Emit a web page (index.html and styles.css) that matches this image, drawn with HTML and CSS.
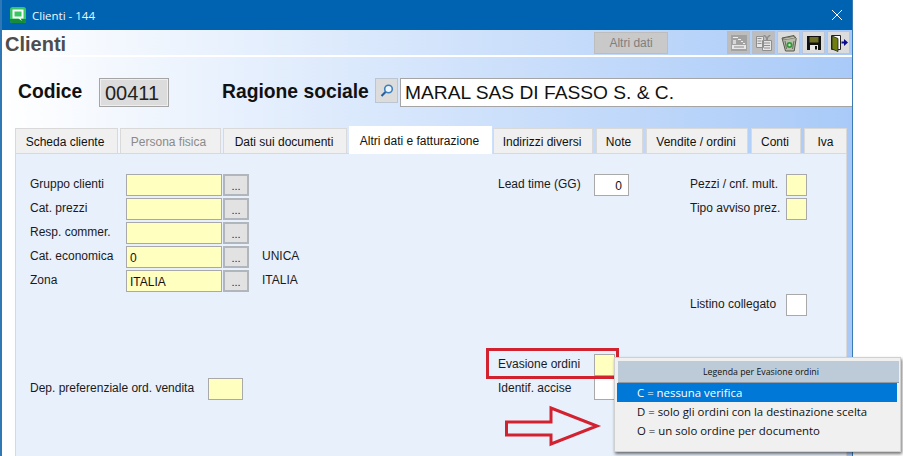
FILE: index.html
```html
<!DOCTYPE html>
<html lang="it">
<head>
<meta charset="utf-8">
<title>Clienti - 144</title>
<link rel="stylesheet" href="styles.css">
</head>
<body>
<div class="window">
  <div class="titlebar">
    <svg class="app-icon" width="16" height="16" viewBox="0 0 16 16"><rect width="16" height="16" rx="2.500" fill="#38c563"/><path d="M0 12h16v1.500a2.500 2.500 0 0 1-2.500 2.500h-11A2.500 2.500 0 0 1 0 13.500z" fill="#178a3c"/><path d="M2.500 2.500h11v9h-3l1.500 2.500-3.500-2.500h-6z" fill="#fff"/><rect x="4.500" y="4.500" width="7" height="5" fill="#38c563"/></svg>
    <span class="title-text">Clienti - 144</span>
    <svg class="close" width="12" height="12" viewBox="0 0 12 12"><path d="M1 1l10 10M11 1L1 11" stroke="#fff" stroke-width="1" fill="none"/></svg>
  </div>
  <div class="toolbar">
    <h1 class="page-title">Clienti</h1>
    <button class="btn-altri">Altri dati</button>
    <div class="tools">
      <span class="tool off"><svg width="20" height="20" viewBox="0 0 20 20"><path d="M2 2h16v16H2z" fill="#a2a2a2"/><path d="M3 12h14v4H3z" fill="#e8e8e8"/><path d="M4 4h5v1H4zM9 6h3v1H9zM12 8h2v1h-2zM14 10h2v1h-2z" fill="#eee"/><path d="M4 7h3v4H4z" fill="#d8d8d8"/><path d="M5 14h10" stroke="#8a8a8a"/></svg></span>
      <span class="tool off"><svg width="20" height="20" viewBox="0 0 20 20"><path d="M2.500 3.500h7v11h-7zM8.500 7.500h9v10h-9z" fill="#e6e6e6" stroke="#8e8e8e"/><path d="M3.500 5.500h4M3.500 8h4M3.500 10.500h4M10 10h6M10 12.500h6M10 15h6" stroke="#8e8e8e"/><path d="M11 2l2 2 2-2h2l-3 3v2h-2V5l-3-3z" fill="#8e8e8e"/></svg></span>
      <span class="tool"><svg width="20" height="20" viewBox="0 0 20 20"><path d="M3 5l12-2.500 2.200 3-2 12.500H6.500L3 5z" fill="#b9bcac" stroke="#55584a"/><path d="M4 5.500l11-2 .8 1.500-11 1.800z" fill="#e4e4d8" stroke="#55584a" stroke-width=".6"/><path d="M6 8l1.500 8M15 8l-1.500 8" stroke="#6a6e5a"/><circle cx="10.500" cy="12" r="3" fill="#2f9a3a"/><circle cx="10.500" cy="12" r="1.200" fill="#c4e8b8"/></svg></span>
      <span class="tool"><svg width="20" height="20" viewBox="0 0 20 20"><path d="M3 3h14v14H3z" fill="#111"/><path d="M5.500 4h9v5.500h-9z" fill="#6f6f26"/><path d="M6 12h8v5H6z" fill="#e8e8e8"/><path d="M11 13h2v3.500h-2z" fill="#111"/></svg></span>
      <span class="tool"><svg width="20" height="20" viewBox="0 0 20 20"><path d="M2.500 2.500h9v14h-9z" fill="#fff" stroke="#222"/><path d="M3 3l6 2.500v13L3 16z" fill="#6f7f10" stroke="#222" stroke-width=".8"/><path d="M12.500 8.500h2.500V6l4 3.500-4 3.500v-2.500h-2.500z" fill="#0a0a90"/></svg></span>
    </div>
  </div>
  <div class="identity">
    <span class="big-label label-code">Codice</span>
    <span class="code-field">00411</span>
    <span class="big-label label-name">Ragione sociale</span>
    <span class="search-btn"><svg width="16" height="16" viewBox="0 0 16 16"><circle cx="9.500" cy="6" r="3.800" fill="#eef6fd" stroke="#3c7fc0" stroke-width="1.600"/><path d="M6.500 9L2.500 13" stroke="#2a5f9c" stroke-width="2.200"/></svg></span>
    <span class="name-field">MARAL SAS DI FASSO S. &amp; C.</span>
  </div>
  <div class="tabs">
    <span class="tab w-scheda">Scheda cliente</span>
    <span class="tab w-persona disabled">Persona fisica</span>
    <span class="tab w-dati">Dati sui documenti</span>
    <span class="tab w-altri active">Altri dati e fatturazione</span>
    <span class="tab w-indirizzi">Indirizzi diversi</span>
    <span class="tab w-note">Note</span>
    <span class="tab w-vendite">Vendite / ordini</span>
    <span class="tab w-conti">Conti</span>
    <span class="tab w-iva">Iva</span>
  </div>
  <div class="panel">
    <div class="col col-left">
      <div class="row"><label class="lbl lbl-left">Gruppo clienti</label><span class="field wide yellow"></span><span class="dots">...</span></div>
      <div class="row"><label class="lbl lbl-left">Cat. prezzi</label><span class="field wide yellow"></span><span class="dots">...</span></div>
      <div class="row"><label class="lbl lbl-left">Resp. commer.</label><span class="field wide yellow"></span><span class="dots">...</span></div>
      <div class="row"><label class="lbl lbl-left">Cat. economica</label><span class="field wide yellow">0</span><span class="dots">...</span><span class="desc">UNICA</span></div>
      <div class="row"><label class="lbl lbl-left">Zona</label><span class="field wide yellow">ITALIA</span><span class="dots">...</span><span class="desc">ITALIA</span></div>
      <div class="row dep"><label class="lbl lbl-dep">Dep. preferenziale ord. vendita</label><span class="field mid yellow"></span></div>
    </div>
    <div class="col col-mid">
      <div class="row"><label class="lbl lbl-mid">Lead time (GG)</label><span class="field mid white num">0</span></div>
      <div class="row evasione"><label class="lbl lbl-mid">Evasione ordini</label><span class="field small yellow"></span></div>
      <div class="row"><label class="lbl lbl-mid">Identif. accise</label><span class="field small white"></span></div>
    </div>
    <div class="col col-right">
      <div class="row"><label class="lbl lbl-mid">Pezzi / cnf. mult.</label><span class="field small yellow"></span></div>
      <div class="row"><label class="lbl lbl-mid">Tipo avviso prez.</label><span class="field small yellow"></span></div>
      <div class="row listino"><label class="lbl lbl-mid">Listino collegato</label><span class="field small white"></span></div>
    </div>
  </div>
</div>
<div class="red-box"></div>
<svg class="arrow" width="100" height="44" viewBox="0 0 100 44"><path d="M2.500 17H47V3L93 21 47 39V30H2.500z" fill="none" stroke="#d3222f" stroke-width="3"/></svg>
<div class="legend">
  <div class="legend-title">Legenda per Evasione ordini</div>
  <div class="legend-item selected">C = nessuna verifica</div>
  <div class="legend-item">D = solo gli ordini con la destinazione scelta</div>
  <div class="legend-item">O = un solo ordine per documento</div>
</div>
</body>
</html>
```

FILE: styles.css
```css
* { box-sizing: border-box; }
html, body { margin: 0; padding: 0; width: 903px; height: 456px; overflow: hidden; background: #fff; }
body { position: relative; font-family: "Liberation Sans", Arial, sans-serif; font-size: 12px; color: #111; }

.window {
  width: 853px; height: 456px; display: flex; flex-direction: column; overflow: hidden;
  border-left: 2px solid #2f78b5; border-right: 1px solid #3b7ab2;
  background: linear-gradient(to right, #fff 0%, #a9caf8 100%);
}
.titlebar {
  height: 30px; margin-left: -2px; margin-right: -1px; flex: none; background: #0063b1;
  display: flex; align-items: center; padding: 0 10px 0 10px; color: #fff;
}
.app-icon { flex: none; }
.title-text { margin-left: 6px; font-family: "Open Sans", sans-serif; font-size: 11.500px; color: #f2f7fb; }
.close { margin-left: auto; }

.toolbar {
  height: 27px; flex: none; display: flex; align-items: flex-start;
  border-bottom: 2px solid; border-image: linear-gradient(to bottom, #a3a3a3 50%, #fff 50%) 1;
  padding: 2px 2px 0 3px;
}
.page-title { margin: 0; font-size: 20px; line-height: 24px; font-weight: 700; color: #4d4d4d; }
.btn-altri {
  margin-left: 528px; width: 74px; height: 22px; padding: 0; border: 1px solid #bdbdbd; background: #c9c9c9;
  font: 12px "Liberation Sans", Arial, sans-serif; color: #7f7f7f;
}
.tools { margin-left: 59px; display: flex; gap: 2px; }
.tool { width: 23px; height: 23px; margin-top: -1px; background: #dcdcdc; border: 1px solid #b9c6d6; display: flex; align-items: center; justify-content: center; }
.tool.off { background: #bdbdbd; border-color: #b4bdc8; }

.identity { height: 71px; flex: none; padding: 21px 0 0 16px; display: flex; align-items: flex-start; }
.big-label { font-size: 19.300px; font-weight: 700; line-height: 27px; color: #111; white-space: nowrap; }
.label-code { width: 64px; }
.label-name { width: 147px; margin-left: 53px; }
.code-field {
  margin-left: 17px; width: 70px; height: 29px; padding-right: 4px; background: #dcdcdc; border: 1px solid #a5a5a5;
  box-shadow: inset 0 0 0 1px #efefef;
  font-size: 20px; line-height: 29px; text-align: center; color: #222; flex: none;
}
.search-btn {
  margin-left: 6px; width: 23px; height: 25px; background: #dcdcdc; border: 1px solid #bcc6d2;
  display: flex; align-items: center; justify-content: center; flex: none;
}
.name-field {
  margin-left: 2px; flex: 1; height: 29px; background: #fff; border: 1px solid #a5a5a5; border-right: 0;
  font-size: 19.200px; line-height: 28px; padding-left: 4px; color: #111;
}

.tabs { height: 25px; flex: none; display: flex; margin-left: 13px; position: relative; z-index: 1; }
.tab {
  height: 25px; margin-right: 3px; padding-right: 2px; background: #f0f0f0; border: 1px solid #d9d9d9; border-bottom: 0;
  text-align: center; line-height: 26px; color: #111; flex: none;
}
.tab.disabled { color: #8a8a8a; }
.tab.active { background: #fff; height: 28px; margin-top: -2px; line-height: 30px; margin-right: 1px; margin-left: -1px; border: 0; }
.w-scheda { width: 103px; margin-right: 2px; padding-right: 3px; }
.w-persona { width: 101px; margin-right: 2px; padding-right: 4px; }
.w-dati { width: 124px; }
.w-altri { width: 143px; }
.w-indirizzi { width: 100px; }
.w-note { width: 47px; }
.w-vendite { width: 102px; }
.w-conti { width: 50px; }
.w-iva { width: 43px; margin-right: 0; padding-right: 0; }

.panel {
  flex: 1; margin: 0 5px 0 13px; background: #e8f0fc;
  border: 1px solid #d9d9d9; border-bottom: 0;
  padding: 20px 0 0 14px; display: flex;
}
.col { display: flex; flex-direction: column; gap: 2px; flex: none; }
.col-left { width: 468px; }
.col-mid { width: 192px; }
.row { display: flex; height: 22px; align-items: flex-start; }
.lbl { line-height: 20px; color: #1a1a1a; white-space: nowrap; flex: none; }
.lbl-left { width: 96px; }
.lbl-mid { width: 96px; }
.lbl-dep { width: 178px; }
.dep { margin-top: 84px; }
.evasione { margin-top: 156px; }
.listino { margin-top: 72px; }
.field {
  height: 22px; border: 1px solid #a9a9a9; font-size: 12px; line-height: 23px; padding-left: 3px; flex: none; color: #111;
}
.wide { width: 96px; }
.mid { width: 35px; }
.small { width: 21px; }
.yellow { background: #ffffc0; }
.white { background: #fff; }
.num { text-align: right; padding: 0 6px 0 0; }
.dots {
  width: 26px; height: 22px; margin-left: 1px; background: #e2e2e2; border: 2px solid #b0b6bc; flex: none;
  text-align: center; line-height: 20px; font-size: 11px; color: #222;
}
.desc { margin-left: 13px; line-height: 20px; color: #1a1a1a; }

.red-box { position: absolute; left: 486px; top: 348px; width: 133px; height: 31px; border: 3px solid #d3222f; }
.arrow { position: absolute; left: 504px; top: 405px; }

.legend {
  position: absolute; left: 614px; top: 357px; width: 287px; height: 95px; background: #f0f0f0; padding: 3px 3px 0 2px;
  border: 1px solid #d0d0d0; box-shadow: 1px 2px 3px rgba(0,0,0,.55);
  font-family: "Open Sans", sans-serif; color: #111;
}
.legend-title {
  height: 22px; background: #bdcbd9; border-bottom: 1px solid #8f9aa5; margin-right: -2px; margin-left: 1px; padding-left: 5px; text-align: center;
  font-size: 8.800px; line-height: 22px;
}
.legend-item { height: 19px; line-height: 19px; font-size: 11.400px; padding-left: 20px; white-space: nowrap; }
.legend-item.selected { background: #0078d7; color: #fff; }
```
